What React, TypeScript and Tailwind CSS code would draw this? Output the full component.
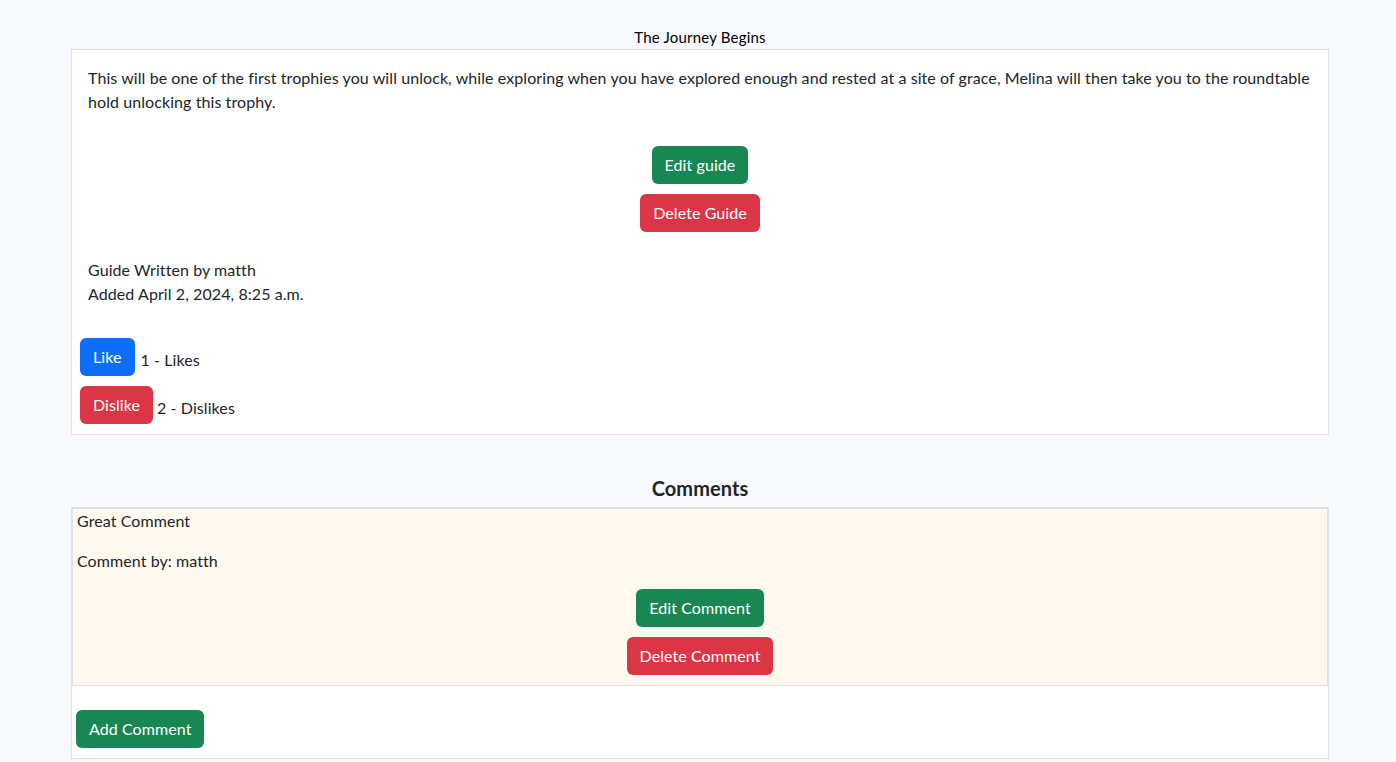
import React from "react";

const btn = "inline-block rounded-[6px] px-3 py-[6px] text-[16px] leading-6 text-white border border-transparent";

export default function App() {
  return (
    <div className="min-h-screen bg-[#f8f9fd] text-[#212529] font-['Lato','Liberation_Sans',sans-serif] text-[16px] leading-6 tracking-[0.08px]">
      <div className="ml-[71px] w-[1258px] pb-4">
        <p className="pt-[25px] text-center text-[15px] leading-6 text-black tracking-[0.2px]">The Journey Begins</p>
        <div className="border border-[#dee2e6] bg-white pt-4 pb-[10px]">
          <p className="px-4">
            This will be one of the first trophies you will unlock, while exploring when you have explored enough and rested at a site of grace, Melina will then take you to the roundtable hold unlocking this trophy.
          </p>
          <div className="mt-8 flex flex-col items-center gap-[10px]">
            <button className={`${btn} bg-[#198754]`}>Edit guide</button>
            <button className={`${btn} bg-[#dc3545]`}>Delete Guide</button>
          </div>
          <div className="mt-[26px] px-4">
            <p>Guide Written by matth</p>
            <p>Added April 2, 2024, 8:25 a.m.</p>
          </div>
          <div className="mt-8 flex flex-col gap-[10px] pl-2">
            <div className="flex items-start">
              <button className={`${btn} bg-[#0d6efd]`}>Like</button>
              <span className="ml-[6px] mt-[10px]">1 - Likes</span>
            </div>
            <div className="flex items-start">
              <button className={`${btn} bg-[#dc3545]`}>Dislike</button>
              <span className="ml-[4px] mt-[10px]">2 - Dislikes</span>
            </div>
          </div>
        </div>

        <h3 className="mt-[41px] mb-[7px] text-center text-[20px] leading-6 font-bold">Comments</h3>
        <div className="border border-[#dee2e6] bg-white pb-[10px]">
          <div className="border border-[#dee2e6] bg-[#fefaef] pb-[10px]">
            <p className="pl-1">Great Comment</p>
            <p className="mt-4 pl-1">Comment by: matth</p>
            <div className="mt-4 flex flex-col items-center gap-[10px]">
              <button className={`${btn} bg-[#198754]`}>Edit Comment</button>
              <button className={`${btn} bg-[#dc3545]`}>Delete Comment</button>
            </div>
          </div>
          <div className="mt-6 pl-1">
            <button className={`${btn} bg-[#198754]`}>Add Comment</button>
          </div>
        </div>
      </div>
    </div>
  );
}
